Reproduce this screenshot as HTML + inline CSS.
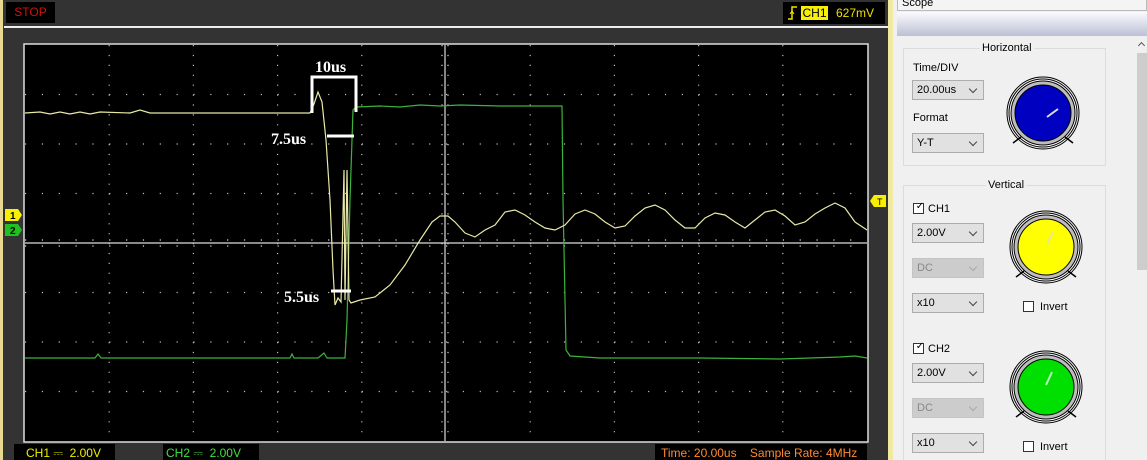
<!DOCTYPE html>
<html><head><meta charset="utf-8"><style>
html,body{margin:0;width:1147px;height:460px;overflow:hidden}
body{background:#333;font-family:"Liberation Sans",sans-serif;position:relative}
.a{position:absolute}
.combo{position:absolute;width:72px;height:20px;background:#e1e1e1;border:1px solid #adadad;box-sizing:border-box;font-size:11px;line-height:18px;padding-left:4px;color:#000}
.combo:after{content:"";position:absolute;right:7px;top:5px;width:5px;height:5px;border-right:1px solid #444;border-bottom:1px solid #444;transform:rotate(45deg)}
.dis{background:#ccc;border-color:#c4c4c4;color:#888}
.dis:after{border-color:#aaa}
.lbl{position:absolute;font-size:11px;color:#000}
.cb{position:absolute;width:11px;height:11px;border:1px solid #333;background:#fff;box-sizing:border-box}
.grp{position:absolute;border:1px solid #dcdcdc;box-sizing:border-box}
.gt{position:absolute;background:#f0f0f0;font-size:11px;padding:0 2px;top:-7px}
</style></head><body>
<div class="a" style="left:0;top:0;width:3px;height:460px;background:#e8d890"></div>
<div class="a" style="left:6px;top:2px;width:49px;height:21px;background:#000;color:#d01010;font-size:12px;line-height:21px;text-align:center">STOP</div>
<div class="a" style="left:4px;top:26px;width:884px;height:2px;background:#eee"></div>
<div class="a" style="left:783px;top:2px;width:102px;height:22px;background:#000"></div>
<svg class="a" style="left:786px;top:5px" width="14" height="16"><path d="M2 14H6V2H11" stroke="#f4e000" stroke-width="1.5" fill="none"/><path d="M4 9L6 6L8 9" stroke="#f4e000" fill="none"/></svg>
<div class="a" style="left:801px;top:6px;width:27px;height:14px;background:#f8f000;color:#000;font-size:12px;line-height:14px;text-align:center">CH1</div>
<div class="a" style="left:836px;top:5px;color:#f0e000;font-size:12px;line-height:16px">627mV</div>
<svg class="a" style="left:0;top:0" width="890" height="460">
<rect x="24" y="44" width="844" height="398" fill="#000" stroke="#ddd" stroke-width="1.5"/>
<g stroke="#bbb" stroke-width="1.2" stroke-dasharray="1.2 8.7">
<line x1="109.2" y1="45" x2="109.2" y2="441"/><line x1="193.4" y1="45" x2="193.4" y2="441"/><line x1="277.6" y1="45" x2="277.6" y2="441"/><line x1="361.8" y1="45" x2="361.8" y2="441"/><line x1="530.2" y1="45" x2="530.2" y2="441"/><line x1="614.4" y1="45" x2="614.4" y2="441"/><line x1="698.6" y1="45" x2="698.6" y2="441"/><line x1="782.8" y1="45" x2="782.8" y2="441"/>
</g>
<g stroke="#bbb" stroke-width="1.2" stroke-dasharray="1.2 15.64">
<line x1="25" y1="94.5" x2="867" y2="94.5"/><line x1="25" y1="144" x2="867" y2="144"/><line x1="25" y1="193.5" x2="867" y2="193.5"/><line x1="25" y1="292.5" x2="867" y2="292.5"/><line x1="25" y1="342" x2="867" y2="342"/><line x1="25" y1="391.5" x2="867" y2="391.5"/>
</g>
<g stroke="#ddd" stroke-width="1.2">
<line x1="25" y1="243" x2="867" y2="243"/><line x1="445" y1="45" x2="445" y2="441"/>
</g>
<g stroke="#ddd" stroke-width="1.2" stroke-dasharray="1.2 15.64"><line x1="25" y1="240" x2="867" y2="240"/><line x1="25" y1="246" x2="867" y2="246"/></g>
<g stroke="#ddd" stroke-width="1.2" stroke-dasharray="1.2 8.7"><line x1="442" y1="45" x2="442" y2="441"/><line x1="448" y1="45" x2="448" y2="441"/></g>
<polyline fill="none" stroke="#3cb43c" stroke-width="1.2" points="25,358 95,358 98,354 101,358 290,358 292,354 294,358 318,358 324,353 327,358 345,358 347,320 350,200 353,110 356,107 380,106 400,107 420,105 440,106 460,105 500,106 540,106 562,106 563,200 566,350 570,356 600,358 700,358 780,359 840,357 855,356 867,358"/>
<polyline fill="none" stroke="#e8e8a8" stroke-width="1.2" points="25,113 40,112 50,114 60,112 70,114 80,112 90,114 100,112 130,113 140,110 150,113 310,113 314,104 318,92 322,102 326,140 330,200 333,270 335,305 338,298 341,302 344,170 345,300 347,170 349,300 351,303 360,300 375,297 390,285 405,265 420,240 432,222 440,216 448,216 455,222 465,233 475,237 485,230 495,225 505,212 515,210 525,215 535,222 545,228 555,230 565,225 575,214 585,210 595,214 605,222 615,228 625,226 635,216 645,208 655,205 665,210 675,220 685,228 695,228 705,218 715,213 725,215 735,222 745,228 755,220 765,212 775,210 785,216 795,225 805,222 815,214 825,208 835,203 845,208 855,222 867,230"/>
<g stroke="#fff" stroke-width="3" fill="none">
<polyline points="312,113 312,77 356,77 356,112"/>
<line x1="327" y1="136" x2="354" y2="136"/>
<line x1="331" y1="291" x2="351" y2="291"/>
</g>
<g fill="#fff" font-family="Liberation Serif,serif" font-weight="bold" font-size="16">
<text x="315" y="72">10us</text><text x="271" y="144">7.5us</text><text x="284" y="302">5.5us</text>
</g>
<path d="M5 209H18L22 215L18 221H5Z" fill="#f8f000"/><text x="10" y="219" font-size="10" font-weight="bold" fill="#000">1</text>
<path d="M5 224H18L22 230L18 236H5Z" fill="#20c020"/><text x="10" y="234" font-size="10" font-weight="bold" fill="#000">2</text>
<path d="M870 201L874 195H886V207H874Z" fill="#f8f000"/><text x="877" y="205" font-size="9" fill="#000">T</text>
</svg>
<div class="a" style="left:14px;top:444px;width:101px;height:16px;background:#000;color:#f0f000;font-size:12px;line-height:18px;padding-left:12px;box-sizing:border-box">CH1 ⎓ &nbsp;2.00V</div>
<div class="a" style="left:163px;top:444px;width:96px;height:16px;background:#000;color:#40e040;font-size:12px;line-height:18px;padding-left:3px;box-sizing:border-box">CH2 ⎓ &nbsp;2.00V</div>
<div class="a" style="left:655px;top:444px;width:212px;height:16px;background:#000;color:#ff8a30;font-size:12px;line-height:18px;padding-left:6px;box-sizing:border-box;white-space:nowrap">Time: 20.00us &nbsp;&nbsp;&nbsp;Sample Rate: 4MHz</div>
<div class="a" style="left:888px;top:0;width:5px;height:460px;background:#f2e9a0"></div>
<div class="a" style="left:893px;top:0;width:254px;height:460px;background:#f0f0f0"></div>
<div class="a" style="left:897px;top:0;width:250px;height:11px;border:1px solid #bbb;border-top:0;background:#f4f4f4;font-size:11px;line-height:6px;padding-left:4px;box-sizing:border-box;overflow:hidden">Scope</div>
<div class="a" style="left:897px;top:12px;width:250px;height:24px;background:linear-gradient(#fafaff,#bcc0d4)"></div>
<div class="a" style="left:1137px;top:37px;width:10px;height:423px;background:#f0f0f0"></div>
<div class="a" style="left:1137px;top:53px;width:10px;height:217px;background:#cdcdcd"></div>
<div class="a" style="left:1139px;top:43px;width:4px;height:4px;border-left:1px solid #555;border-top:1px solid #555;transform:rotate(45deg)"></div>
<div class="grp" style="left:903px;top:48px;width:203px;height:118px"><div class="gt" style="left:76px">Horizontal</div></div>
<div class="lbl" style="left:913px;top:62px">Time/DIV</div>
<div class="combo" style="left:912px;top:80px">20.00us</div>
<div class="lbl" style="left:913px;top:112px">Format</div>
<div class="combo" style="left:912px;top:133px">Y-T</div>
<div class="grp" style="left:903px;top:185px;width:203px;height:275px;border-bottom:0"><div class="gt" style="left:82px">Vertical</div></div>
<div class="cb" style="left:913px;top:203px"></div><div class="lbl" style="left:913px;top:201px;font-size:10px">&nbsp;✓</div><div class="lbl" style="left:928px;top:203px">CH1</div>
<div class="combo" style="left:912px;top:223px">2.00V</div>
<div class="combo dis" style="left:912px;top:258px">DC</div>
<div class="combo" style="left:912px;top:293px">x10</div>
<div class="cb" style="left:1023px;top:301px"></div><div class="lbl" style="left:1040px;top:301px">Invert</div>
<div class="cb" style="left:913px;top:343px"></div><div class="lbl" style="left:913px;top:341px;font-size:10px">&nbsp;✓</div><div class="lbl" style="left:928px;top:343px">CH2</div>
<div class="combo" style="left:912px;top:363px">2.00V</div>
<div class="combo dis" style="left:912px;top:398px">DC</div>
<div class="combo" style="left:912px;top:433px">x10</div>
<div class="cb" style="left:1023px;top:441px"></div><div class="lbl" style="left:1040px;top:441px">Invert</div>
<svg class="a" style="left:1000px;top:70px" width="90" height="390">
<defs><g id="k"><circle r="36" fill="none" stroke="#000"/><circle r="34" fill="#fff" stroke="#000"/><circle r="32" fill="#bdbdbd" stroke="#000"/><path d="M-22 24L-30 30M22 24L30 30" stroke="#000" stroke-width="1.5"/></g></defs>
<g transform="translate(43,43)"><use href="#k"/><circle r="28" fill="#0000c0" stroke="#000"/><line x1="4" y1="4" x2="15" y2="-4" stroke="#ddd" stroke-width="2"/></g>
<g transform="translate(46,177)"><use href="#k"/><circle r="28" fill="#ffff00" stroke="#000"/><line x1="1" y1="-3" x2="7" y2="-15" stroke="#e8e890" stroke-width="2"/></g>
<g transform="translate(46,317)"><use href="#k"/><circle r="28" fill="#00e000" stroke="#000"/><line x1="0" y1="-2" x2="6" y2="-15" stroke="#c0f0c0" stroke-width="2"/></g>
</svg>
</body></html>
